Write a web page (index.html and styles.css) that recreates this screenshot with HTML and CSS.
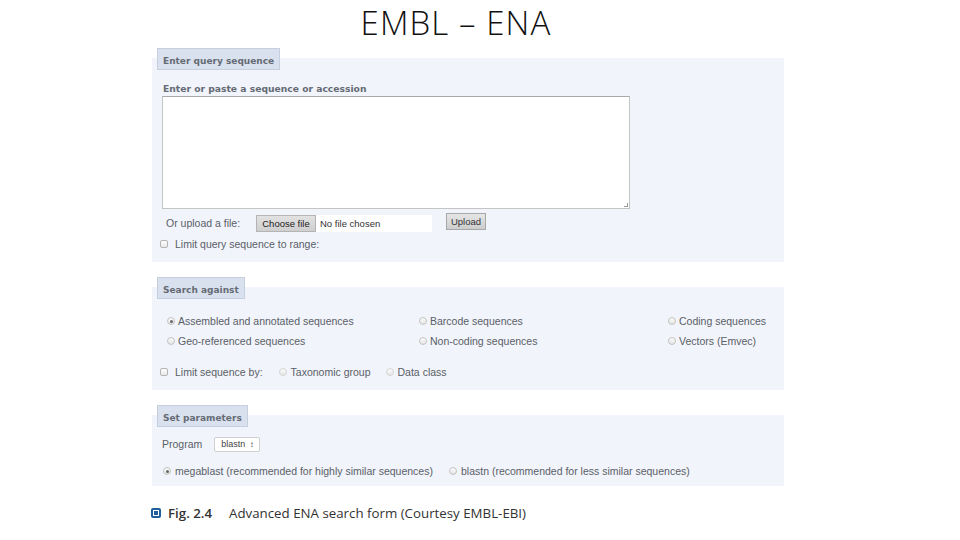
FILE: index.html
```html
<!DOCTYPE html>
<html>
<head>
<meta charset="utf-8">
<link rel="stylesheet" href="styles.css">
</head>
<body>
<h1 class="title">EMBL – ENA</h1>
<div class="form">
  <section class="box box1">
    <div class="tab">Enter query sequence</div>
    <div class="sublabel">Enter or paste a sequence or accession</div>
    <div class="textarea"><span class="grip"></span></div>
    <div class="row upload">
      <span class="txt uplabel">Or upload a file:</span>
      <span class="filebtn">Choose file</span><span class="filename">No file chosen</span>
      <span class="btn">Upload</span>
    </div>
    <div class="row range">
      <span class="check"></span><span class="txt">Limit query sequence to range:</span>
    </div>
  </section>

  <section class="box box2">
    <div class="tab">Search against</div>
    <div class="grid">
      <div class="opt"><span class="radio on"></span><span class="txt">Assembled and annotated sequences</span></div>
      <div class="opt"><span class="radio"></span><span class="txt">Barcode sequences</span></div>
      <div class="opt"><span class="radio"></span><span class="txt">Coding sequences</span></div>
      <div class="opt"><span class="radio"></span><span class="txt">Geo-referenced sequences</span></div>
      <div class="opt"><span class="radio"></span><span class="txt">Non-coding sequences</span></div>
      <div class="opt"><span class="radio"></span><span class="txt">Vectors (Emvec)</span></div>
    </div>
    <div class="row limit">
      <span class="check"></span><span class="txt">Limit sequence by:</span>
      <span class="radio faint tax"></span><span class="txt">Taxonomic group</span>
      <span class="radio faint dc"></span><span class="txt">Data class</span>
    </div>
  </section>

  <section class="box box3">
    <div class="tab">Set parameters</div>
    <div class="row program">
      <span class="txt">Program</span>
      <span class="select">blastn <span class="arrows">&#8597;</span></span>
    </div>
    <div class="row algo">
      <span class="radio on"></span><span class="txt">megablast (recommended for highly similar sequences)</span>
      <span class="radio second"></span><span class="txt">blastn (recommended for less similar sequences)</span>
    </div>
  </section>
</div>
<div class="caption">
  <span class="icon"><span class="icon-in"></span></span>
  <span class="fig">Fig. 2.4</span>
  <span class="cap">Advanced ENA search form (Courtesy EMBL-EBI)</span>
</div>
</body>
</html>
```

FILE: styles.css
```css
html, body {
  margin: 0;
  padding: 0;
  background: #ffffff;
  width: 960px;
  height: 540px;
  overflow: hidden;
}
.title {
  margin: 0;
  height: 48px;
  padding: 1px 48px 0 0;
  box-sizing: border-box;
  text-align: center;
  font-family: "Open Sans", "Liberation Sans", sans-serif;
  font-weight: 300;
  font-size: 33px;
  line-height: 44px;
  color: #111;
  letter-spacing: 1.1px;
}
.form {
  margin-left: 152px;
  width: 632px;
}
.box {
  background: linear-gradient(to bottom, transparent 10px, #f1f4fa 10px);
}
.box + .box { margin-top: 15px; }
.box1 { height: 214px; }
.box2 { height: 113px; }
.box3 { height: 81px; }
.tab {
  display: inline-block;
  margin-left: 5px;
  height: 22px;
  box-sizing: border-box;
  padding: 0 5px 0 5px;
  background: #dae1ee;
  border: 1px solid #c6cfe0;
  font-family: "DejaVu Sans", Verdana, sans-serif;
  font-weight: bold;
  font-size: 9px;
  line-height: 24px;
  color: #656b75;
  vertical-align: top;
}
.sublabel {
  margin: 13px 0 0 11px;
  height: 12px;
  font-family: "DejaVu Sans", Verdana, sans-serif;
  font-weight: bold;
  font-size: 9.2px;
  line-height: 12px;
  color: #656b75;
}
.textarea {
  position: relative;
  margin: 1px 0 0 10px;
  width: 468px;
  height: 113px;
  box-sizing: border-box;
  background: #fff;
  border: 1px solid #c4c4c4;
  border-top-color: #a9a9a9;
}
.grip {
  position: absolute;
  right: 1px;
  bottom: 1px;
  width: 3px;
  height: 3px;
  border-right: 1px solid #999;
  border-bottom: 1px solid #999;
}
.row {
  display: flex;
  align-items: center;
}
.txt {
  font-family: "Liberation Sans", Arial, sans-serif;
  font-size: 10.5px;
  color: #5a6068;
  white-space: nowrap;
}
.upload {
  height: 18px;
  margin-top: 5px;
}
.uplabel { margin-left: 14px; width: 90px; }
.filebtn {
  height: 17px;
  width: 60px;
  box-sizing: border-box;
  background: linear-gradient(#e2e2e2, #cfcfcf);
  border: 1px solid #b4b4b4;
  font-family: "Liberation Sans", Arial, sans-serif;
  font-size: 9.5px;
  line-height: 15px;
  text-align: center;
  color: #222;
}
.filename {
  height: 17px;
  width: 116px;
  box-sizing: border-box;
  padding-left: 4px;
  background: #fff;
  font-family: "Liberation Sans", Arial, sans-serif;
  font-size: 9.5px;
  line-height: 17px;
  color: #333;
}
.btn {
  margin-left: 14px;
  height: 17px;
  width: 40px;
  box-sizing: border-box;
  background: linear-gradient(#e6e6e6, #cdcdcd);
  border: 1px solid #a8a8a8;
  font-family: "Liberation Sans", Arial, sans-serif;
  font-size: 9.5px;
  line-height: 15px;
  text-align: center;
  color: #333;
  align-self: flex-start;
  margin-top: -1px;
}
.range { height: 14px; margin-top: 5px; }
.check {
  display: inline-block;
  width: 8px;
  height: 8px;
  box-sizing: border-box;
  border: 1px solid #b5b5b5;
  border-radius: 2px;
  background: linear-gradient(#fdfdfd, #e9e9e9);
  margin-left: 8px;
  margin-right: 7px;
  flex: none;
}
.radio {
  display: inline-block;
  position: relative;
  width: 8px;
  height: 8px;
  box-sizing: border-box;
  border: 1px solid #c3c3c3;
  border-radius: 50%;
  background: linear-gradient(#fcfcfc, #e4e4e4);
  margin-right: 4px;
  flex: none;
}
.radio.on::after {
  content: "";
  position: absolute;
  left: 1.5px;
  top: 1.5px;
  width: 3px;
  height: 3px;
  border-radius: 50%;
  background: #666;
}
.radio.faint { border-color: #d6d6d6; }
.grid {
  display: grid;
  grid-template-columns: 252px 249px auto;
  grid-auto-rows: 20px;
  padding-left: 15px;
  margin-top: 12px;
}
.opt { display: flex; align-items: center; }
.opt .radio { margin-right: 3px; }
.limit { height: 14px; margin-top: 14px; }
.limit .tax { margin-left: 16px; }
.limit .dc { margin-left: 15px; }
.program { height: 16px; margin-top: 9px; padding-left: 10px; }
.select {
  margin-left: 12px;
  height: 15px;
  width: 46px;
  box-sizing: border-box;
  background: #fff;
  border: 1px solid #d0d0d0;
  border-radius: 2px;
  font-family: "Liberation Sans", Arial, sans-serif;
  font-size: 9px;
  line-height: 13px;
  color: #444;
  padding-left: 6px;
}
.arrows { font-size: 8px; margin-left: 2px; }
.algo { height: 14px; margin-top: 12px; padding-left: 11px; }
.algo .second { margin-left: 16px; }
.caption {
  display: flex;
  align-items: center;
  margin: 18px 0 0 151px;
  height: 18px;
}
.icon {
  width: 10px;
  height: 10px;
  border-radius: 2px;
  background: #1f5f9b;
  display: flex;
  align-items: center;
  justify-content: center;
}
.icon-in {
  width: 4px;
  height: 4px;
  border: 1px solid #fff;
}
.fig {
  margin-left: 7px;
  font-family: "Open Sans", "Liberation Sans", sans-serif;
  font-weight: 600;
  font-size: 13.3px;
  color: #333;
  width: 61px;
}
.cap {
  font-family: "Open Sans", "Liberation Sans", sans-serif;
  font-size: 13.3px;
  color: #333;
}
```
